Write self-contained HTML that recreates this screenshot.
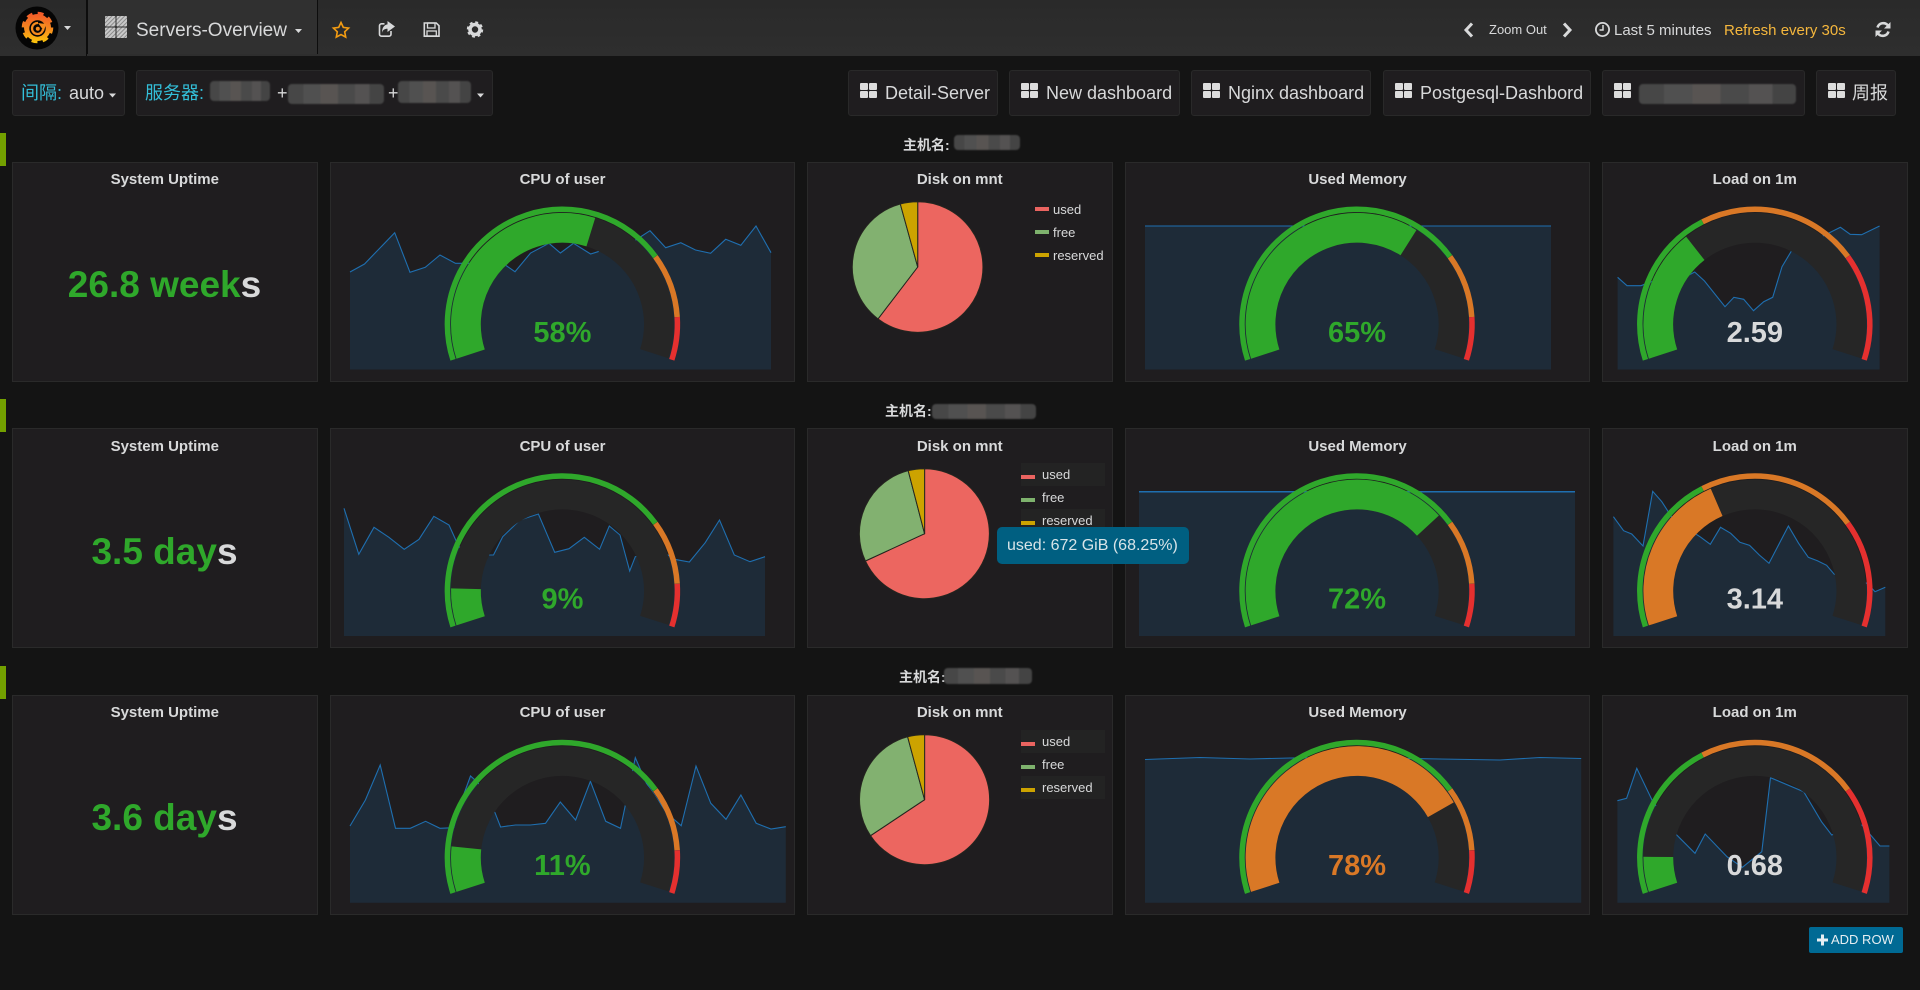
<!DOCTYPE html>
<html><head><meta charset="utf-8"><title>Servers-Overview</title>
<style>
*{box-sizing:border-box}
html,body{margin:0;padding:0;width:1920px;height:990px;overflow:hidden;background:#141414;font-family:"Liberation Sans","Noto Sans CJK SC",sans-serif;color:#d8d9da}
.a{position:absolute;white-space:nowrap}
.nav{left:0;top:0;width:1920px;height:56px;background:linear-gradient(#2a2a2a,#2e2e2e)}
.tab{left:87px;top:0;width:231px;height:54px;background:#303030;border-left:1px solid #0d0d0d;border-right:1px solid #0d0d0d}
.sep{left:86px;top:0;width:1px;height:56px;background:#0d0d0d}
.box{background:#1f1d1f;border:1px solid #292929;border-radius:3px;top:70px;height:46px}
.t18{font-size:18px;top:82px;line-height:22px}
.cy{color:#33bfd9}
.p{background:#1f1d1f;border:1px solid #2a2a2a;width:305.5px;height:219.5px}
.ti{font-size:15px;font-weight:bold;text-align:center;left:0;right:0;top:8px;line-height:18px;position:absolute}
.r2 .ti,.ti.r2{top:9px}
.stat{font-size:37px;font-weight:bold;color:#2fa82b;text-align:center;line-height:44px}
.stat b{color:#d8d9da}
.mark{left:0;width:6px;height:33px;background:#73a000}
.rt{font-size:14px;font-weight:bold;line-height:18px}
.bl{background:linear-gradient(90deg,#474747 0 16%,#505050 16% 34%,#585452 34% 52%,#4a4a4a 52% 70%,#545252 70% 85%,#444 85%);filter:blur(.8px);border-radius:4px}
.lg{font-size:13px;line-height:16px}
.sw{width:14px;height:4px}
.lbg{background:#232323;width:84px;height:23px}
.tip{left:997px;top:527px;width:192px;height:37px;background:#005f81;border-radius:5px;font-size:16px;line-height:37px;padding-left:10px;color:#d8e4e8}
.add{left:1809px;top:927px;width:94px;height:26px;background:#006a94;border-radius:2px;font-size:13px;line-height:25px;padding-left:22px;color:#e6eef2}
svg{position:absolute;left:0;top:0}
</style></head><body>
<div class="a nav"></div>
<div class="a tab"></div>
<div class="a sep"></div>
<div class="a" style="left:136px;top:19px;font-size:19px;line-height:24px;color:#d8d9da">Servers-Overview</div>
<div class="a" style="left:1489px;top:22px;font-size:13px;line-height:16px">Zoom Out</div>
<div class="a" style="left:1614px;top:22px;font-size:15px;line-height:18px">Last 5 minutes</div>
<div class="a" style="left:1724px;top:22px;font-size:15px;line-height:18px;color:#f5b73d">Refresh every 30s</div>

<div class="a box" style="left:12px;width:113px"></div>
<div class="a t18 cy" style="left:21px">间隔:</div>
<div class="a t18" style="left:69px">auto</div>
<div class="a box" style="left:136px;width:357px"></div>
<div class="a t18 cy" style="left:145px">服务器:</div>
<div class="a bl" style="left:210px;top:81px;width:60px;height:20px"></div>
<div class="a t18" style="left:277px">+</div>
<div class="a bl" style="left:288px;top:84px;width:96px;height:20px"></div>
<div class="a t18" style="left:388px">+</div>
<div class="a bl" style="left:398px;top:81px;width:73px;height:22px"></div>

<div class="a box" style="left:848px;width:150px"></div>
<div class="a t18" style="left:885px">Detail-Server</div>
<div class="a box" style="left:1009px;width:171px"></div>
<div class="a t18" style="left:1046px">New dashboard</div>
<div class="a box" style="left:1191px;width:180px"></div>
<div class="a t18" style="left:1228px">Nginx dashboard</div>
<div class="a box" style="left:1383px;width:208px"></div>
<div class="a t18" style="left:1420px">Postgesql-Dashbord</div>
<div class="a box" style="left:1602px;width:203px"></div>
<div class="a bl" style="left:1639px;top:84px;width:157px;height:20px"></div>
<div class="a box" style="left:1816px;width:80px"></div>
<div class="a t18" style="left:1852px">周报</div>

<div class="a mark" style="top:133px"></div>
<div class="a mark" style="top:399px"></div>
<div class="a mark" style="top:666px"></div>
<div class="a rt" style="left:903px;top:136px">主机名:</div>
<div class="a bl" style="left:954px;top:135px;width:66px;height:15px"></div>
<div class="a rt" style="left:885px;top:402px">主机名:</div>
<div class="a bl" style="left:932px;top:404px;width:104px;height:15px"></div>
<div class="a rt" style="left:899px;top:668px">主机名:</div>
<div class="a bl" style="left:944px;top:668px;width:88px;height:16px"></div>

<!-- Row 1 panels -->
<div class="a p" style="left:12px;top:162px"><div class="ti">System Uptime</div></div>
<div class="a p" style="left:330px;top:162px;width:465px"><div class="ti">CPU of user</div></div>
<div class="a p" style="left:807px;top:162px"><div class="ti">Disk on mnt</div></div>
<div class="a p" style="left:1125px;top:162px;width:465px"><div class="ti">Used Memory</div></div>
<div class="a p" style="left:1602px;top:162px"><div class="ti">Load on 1m</div></div>
<!-- Row 2 panels -->
<div class="a p r2" style="left:12px;top:428px"><div class="ti">System Uptime</div></div>
<div class="a p r2" style="left:330px;top:428px;width:465px"><div class="ti">CPU of user</div></div>
<div class="a p r2" style="left:807px;top:428px"><div class="ti">Disk on mnt</div></div>
<div class="a p r2" style="left:1125px;top:428px;width:465px"><div class="ti">Used Memory</div></div>
<div class="a p r2" style="left:1602px;top:428px"><div class="ti">Load on 1m</div></div>
<!-- Row 3 panels -->
<div class="a p" style="left:12px;top:695px"><div class="ti">System Uptime</div></div>
<div class="a p" style="left:330px;top:695px;width:465px"><div class="ti">CPU of user</div></div>
<div class="a p" style="left:807px;top:695px"><div class="ti">Disk on mnt</div></div>
<div class="a p" style="left:1125px;top:695px;width:465px"><div class="ti">Used Memory</div></div>
<div class="a p" style="left:1602px;top:695px"><div class="ti">Load on 1m</div></div>

<div class="a stat" style="left:12px;width:305px;top:262.5px">26.8 week<b>s</b></div>
<div class="a stat" style="left:12px;width:305px;top:530px">3.5 day<b>s</b></div>
<div class="a stat" style="left:12px;width:305px;top:796px">3.6 day<b>s</b></div>

<!-- legends -->
<div class="a lbg" style="left:1021px;top:463px"></div>
<div class="a lbg" style="left:1021px;top:509px"></div>
<div class="a lbg" style="left:1021px;top:730px"></div>
<div class="a lbg" style="left:1021px;top:776px"></div>

<div class="a sw" style="left:1035px;top:207px;background:#ea6460"></div><div class="a lg" style="left:1053px;top:202px">used</div>
<div class="a sw" style="left:1035px;top:230px;background:#7eb26d"></div><div class="a lg" style="left:1053px;top:225px">free</div>
<div class="a sw" style="left:1035px;top:253px;background:#cca300"></div><div class="a lg" style="left:1053px;top:248px">reserved</div>

<div class="a sw" style="left:1021px;top:475px;background:#ea6460"></div><div class="a lg" style="left:1042px;top:467px">used</div>
<div class="a sw" style="left:1021px;top:498px;background:#7eb26d"></div><div class="a lg" style="left:1042px;top:490px">free</div>
<div class="a sw" style="left:1021px;top:521px;background:#cca300"></div><div class="a lg" style="left:1042px;top:513px">reserved</div>

<div class="a sw" style="left:1021px;top:742px;background:#ea6460"></div><div class="a lg" style="left:1042px;top:734px">used</div>
<div class="a sw" style="left:1021px;top:765px;background:#7eb26d"></div><div class="a lg" style="left:1042px;top:757px">free</div>
<div class="a sw" style="left:1021px;top:788px;background:#cca300"></div><div class="a lg" style="left:1042px;top:780px">reserved</div>

<svg width="1920" height="990" viewBox="0 0 1920 990" xmlns="http://www.w3.org/2000/svg">
<defs>
<pattern id="h" width="3" height="3" patternUnits="userSpaceOnUse" patternTransform="rotate(45)"><rect width="3" height="3" fill="#c9c9c9"/><rect width="1" height="3" fill="#8a8a8a"/></pattern>
<linearGradient id="fl" gradientUnits="userSpaceOnUse" x1="37" y1="11" x2="37" y2="44"><stop offset="0" stop-color="#f0522b"/><stop offset=".55" stop-color="#f78b1e"/><stop offset="1" stop-color="#fbca0a"/></linearGradient>
<symbol id="th" viewBox="0 0 17 15" overflow="visible"><rect x="0" y="0" width="8" height="7" rx="1" fill="#dcdcdc"/><rect x="9" y="0" width="8" height="7" rx="1" fill="#dcdcdc"/><rect x="0" y="8" width="8" height="7" rx="1" fill="#dcdcdc"/><rect x="9" y="8" width="8" height="7" rx="1" fill="#dcdcdc"/></symbol>
</defs>

<!-- logo -->
<circle cx="37" cy="28" r="21.5" fill="#050505"/>
<circle cx="37.5" cy="27.5" r="13.5" fill="url(#fl)"/>
<circle cx="37.5" cy="27.5" r="14.5" fill="none" stroke="url(#fl)" stroke-width="2.6" stroke-dasharray="6 5.4"/>
<circle cx="37.5" cy="28.5" r="8.2" fill="#050505"/>
<path d="M43 29 A5.5 5.5 0 1 1 38 23" fill="none" stroke="#f78b1e" stroke-width="2.3"/>
<path d="M38 23 L46 24 L44 31 Z" fill="#f78b1e"/>
<circle cx="37.8" cy="28.8" r="2" fill="#f78b1e"/>
<path d="M64 26 h7 l-3.5 4 z" fill="#d8d9da"/>

<!-- dashboard icon -->
<rect x="105" y="16" width="10.5" height="10.5" rx="1" fill="url(#h)"/><rect x="116.5" y="16" width="10.5" height="10.5" rx="1" fill="url(#h)"/>
<rect x="105" y="27.5" width="10.5" height="10.5" rx="1" fill="url(#h)"/><rect x="116.5" y="27.5" width="10.5" height="10.5" rx="1" fill="url(#h)"/>
<path d="M295 29 h7 l-3.5 4 z" fill="#d8d9da"/>

<!-- star -->
<path d="M341 22.5 l2.3 4.9 5.3 .7 -3.9 3.7 1 5.3 -4.7 -2.6 -4.7 2.6 1 -5.3 -3.9 -3.7 5.3 -.7 z" fill="none" stroke="#f39c12" stroke-width="1.6" stroke-linejoin="miter"/>
<!-- share -->
<path d="M391 31 v3.2 a2 2 0 0 1-2 2 h-7.5 a2 2 0 0 1-2-2 v-8.4 a2 2 0 0 1 2-2 h3" fill="none" stroke="#d8d9da" stroke-width="1.6"/>
<path d="M387.5 21 l7.5 5.5 -7.5 5.5 v-3.2 c-2.8 0-4.6 .9-5.5 3.9 c0-5 2.3-8 5.5-8.3 z" fill="#d8d9da"/>
<!-- save -->
<path d="M424.3 23 h12 l2.7 2.7 v10.5 h-14.7 z" fill="none" stroke="#d8d9da" stroke-width="1.6"/>
<rect x="427.5" y="23" width="7.5" height="5" fill="none" stroke="#d8d9da" stroke-width="1.3"/>
<rect x="427" y="31" width="9.3" height="5" fill="none" stroke="#d8d9da" stroke-width="1.3"/>
<!-- gear -->
<circle cx="475" cy="29.5" r="5" fill="none" stroke="#d8d9da" stroke-width="3.6"/>
<circle cx="475" cy="29.5" r="7" fill="none" stroke="#d8d9da" stroke-width="2.4" stroke-dasharray="2.8 2.7"/>
<!-- chevrons -->
<path d="M1472 23.5 l-6 6.5 6 6.5" fill="none" stroke="#d8d9da" stroke-width="3"/>
<path d="M1564 23.5 l6 6.5 -6 6.5" fill="none" stroke="#d8d9da" stroke-width="3"/>
<!-- clock -->
<circle cx="1602.5" cy="29.5" r="6.6" fill="none" stroke="#d8d9da" stroke-width="1.8"/>
<path d="M1603 25 v5 h-3.5" fill="none" stroke="#d8d9da" stroke-width="1.5"/>
<!-- refresh -->
<path d="M1877.5 27.5 a6 6 0 0 1 10.5 -2" fill="none" stroke="#d8d9da" stroke-width="2.6"/>
<path d="M1890.5 22 v6.5 h-6.5 z" fill="#d8d9da"/>
<path d="M1888.5 31.5 a6 6 0 0 1 -10.5 2" fill="none" stroke="#d8d9da" stroke-width="2.6"/>
<path d="M1875.5 37 v-6.5 h6.5 z" fill="#d8d9da"/>

<!-- submenu carets -->
<path d="M109 93.5 h7 l-3.5 4 z" fill="#d8d9da"/>
<path d="M477 93.5 h7 l-3.5 4 z" fill="#d8d9da"/>
<!-- link icons -->
<use href="#th" x="860" y="83" width="17" height="15"/>
<use href="#th" x="1021" y="83" width="17" height="15"/>
<use href="#th" x="1203" y="83" width="17" height="15"/>
<use href="#th" x="1395" y="83" width="17" height="15"/>
<use href="#th" x="1614" y="83" width="17" height="15"/>
<use href="#th" x="1828" y="83" width="17" height="15"/>

<!-- sparklines -->
<g fill="#1e2b38" stroke="none">
<polygon points="350,369.5 350,272 364.5,264 394.7,232.7 410,272.3 425.3,267.3 440,255 455.5,263.3 469.4,263.3 484.5,262 500,250 505.3,265 515,271.7 530.6,253 549,243.3 560.4,253 573.5,243.3 590.6,254 598,251.7 612,240 628,245 650,230.7 665.7,247.7 680.8,242.7 695.5,250 710.6,253.3 725.7,239.3 740.8,245.3 756,226 771,252.7 771,369.5"/>
<rect x="1145" y="226" width="406" height="143.5"/>
<polygon points="1617.6,369.5 1617.6,277.3 1627,285.7 1641,285.7 1651.4,281.7 1670,285 1694.7,272 1704.5,281 1725,306.7 1733.9,297.3 1743.7,299.3 1753.5,310.7 1763.7,301.7 1772.7,297.3 1782,266.7 1791,251.7 1800,240 1812,238 1822.9,236 1840.4,227.3 1850.2,234.3 1861.6,234.7 1879.6,226 1879.6,369.5"/>
<polygon points="344,636 344,508.3 358.8,554.3 374,527.3 388.9,537.3 404.2,549.3 419,539.3 433.8,516.3 449,525 458.8,546.7 478,555 493.5,555 502.7,536.7 520,520 538.4,514 554.7,552.3 569,548.7 584.3,537.3 599.6,549.3 609.3,526 620,535 629.7,571 635.3,556.7 650,553 668,555 674.6,559.3 689.4,562 705.2,542.7 719.5,520 734.3,555 750,561.7 765,556.7 765,636"/>
<rect x="1139" y="491.7" width="436" height="144.3"/>
<polygon points="1613.4,636 1613.4,516.7 1623.6,530.7 1631.7,534 1643,546 1652.7,491.3 1661.8,501.7 1673.6,520 1700,536.7 1710.3,544.3 1720.5,527.3 1730.7,533.3 1739.9,542.3 1749.6,545.3 1759.3,555 1769,563.3 1788.4,526 1798.6,543.3 1808.3,557.3 1817.4,560.7 1826.6,565.3 1834.3,574.3 1850,580 1867.4,583.3 1875,591.7 1885.3,587.3 1885.3,636"/>
<polygon points="350,902.7 350,826 365.4,800 380.2,765 395.5,828.3 410.3,828.3 425.6,821.3 439.9,828.3 453.7,827.7 459.3,806.7 470.5,776 478,782.7 495,812.7 500.6,827 515.4,825 530.2,825 545.5,823.3 560.3,802 575.6,820 590.4,781.3 605.7,821.3 620.5,828.3 635.3,757.7 646.5,783.3 667,813.3 681.2,825.7 696,766 710.8,803.3 726,819.3 740.9,795 756.2,823.3 771,829 785.8,826.7 785.8,902.7"/>
<polygon points="1145,902.7 1145,759.5 1200,757.5 1250,759 1290,758 1360,757.5 1440,759 1500,760 1540,757.5 1581.2,758.5 1581.2,902.7"/>
<polygon points="1617.4,902.7 1617.4,800.7 1626.6,798.3 1636.8,768.3 1652,800 1676,834.3 1695,853.3 1705.2,834 1727,856.7 1742.4,867.3 1761.8,851.7 1770.5,777.7 1803.7,791.7 1821.5,821.7 1831.7,835 1862,825 1880,846 1889.4,846 1889.4,902.7"/>
</g>
<g fill="none" stroke="#1f6fb0" stroke-width="1.1">
<polyline points="350,272 364.5,264 394.7,232.7 410,272.3 425.3,267.3 440,255 455.5,263.3 469.4,263.3 484.5,262 500,250 505.3,265 515,271.7 530.6,253 549,243.3 560.4,253 573.5,243.3 590.6,254 598,251.7 612,240 628,245 650,230.7 665.7,247.7 680.8,242.7 695.5,250 710.6,253.3 725.7,239.3 740.8,245.3 756,226 771,252.7"/>
<polyline points="1145,226 1551,226"/>
<polyline points="1617.6,277.3 1627,285.7 1641,285.7 1651.4,281.7 1670,285 1694.7,272 1704.5,281 1725,306.7 1733.9,297.3 1743.7,299.3 1753.5,310.7 1763.7,301.7 1772.7,297.3 1782,266.7 1791,251.7 1800,240 1812,238 1822.9,236 1840.4,227.3 1850.2,234.3 1861.6,234.7 1879.6,226"/>
<polyline points="344,508.3 358.8,554.3 374,527.3 388.9,537.3 404.2,549.3 419,539.3 433.8,516.3 449,525 458.8,546.7 478,555 493.5,555 502.7,536.7 520,520 538.4,514 554.7,552.3 569,548.7 584.3,537.3 599.6,549.3 609.3,526 620,535 629.7,571 635.3,556.7 650,553 668,555 674.6,559.3 689.4,562 705.2,542.7 719.5,520 734.3,555 750,561.7 765,556.7"/>
<polyline points="1139,491.7 1575,491.7" stroke-width="1.5"/>
<polyline points="1613.4,516.7 1623.6,530.7 1631.7,534 1643,546 1652.7,491.3 1661.8,501.7 1673.6,520 1700,536.7 1710.3,544.3 1720.5,527.3 1730.7,533.3 1739.9,542.3 1749.6,545.3 1759.3,555 1769,563.3 1788.4,526 1798.6,543.3 1808.3,557.3 1817.4,560.7 1826.6,565.3 1834.3,574.3 1850,580 1867.4,583.3 1875,591.7 1885.3,587.3"/>
<polyline points="350,826 365.4,800 380.2,765 395.5,828.3 410.3,828.3 425.6,821.3 439.9,828.3 453.7,827.7 459.3,806.7 470.5,776 478,782.7 495,812.7 500.6,827 515.4,825 530.2,825 545.5,823.3 560.3,802 575.6,820 590.4,781.3 605.7,821.3 620.5,828.3 635.3,757.7 646.5,783.3 667,813.3 681.2,825.7 696,766 710.8,803.3 726,819.3 740.9,795 756.2,823.3 771,829 785.8,826.7"/>
<polyline points="1145,759.5 1200,757.5 1250,759 1290,758 1360,757.5 1440,759 1500,760 1540,757.5 1581.2,758.5"/>
<polyline points="1617.4,800.7 1626.6,798.3 1636.8,768.3 1652,800 1676,834.3 1695,853.3 1705.2,834 1727,856.7 1742.4,867.3 1761.8,851.7 1770.5,777.7 1803.7,791.7 1821.5,821.7 1831.7,835 1862,825 1880,846 1889.4,846"/>
</g>

<!-- pies -->
<g stroke="#25251f" stroke-width="1" stroke-linejoin="round">
<path d="M917.7 267 V201.7 A65.3 65.3 0 1 1 878 318.9 Z" fill="#ec6660"/>
<path d="M917.7 267 L878 318.9 A65.3 65.3 0 0 1 900.3 204 Z" fill="#82b170"/>
<path d="M917.7 267 L900.3 204 A65.3 65.3 0 0 1 917.7 201.7 Z" fill="#cca300"/>
<path d="M924.6 533.7 V468.7 A65 65 0 1 1 865.4 561 Z" fill="#ec6660"/>
<path d="M924.6 533.7 L865.4 561 A65 65 0 0 1 908.2 470.7 Z" fill="#82b170"/>
<path d="M924.6 533.7 L908.2 470.7 A65 65 0 0 1 924.6 468.7 Z" fill="#cca300"/>
<path d="M924.6 799.7 V734.7 A65 65 0 1 1 870.5 835.7 Z" fill="#ec6660"/>
<path d="M924.6 799.7 L870.5 835.7 A65 65 0 0 1 907.6 736.8 Z" fill="#82b170"/>
<path d="M924.6 799.7 L907.6 736.8 A65 65 0 0 1 924.6 734.7 Z" fill="#cca300"/>
</g>

<!-- gauges -->
<g transform="translate(562.4,324.3)" fill="none">
<circle r="96.5" pathLength="360" stroke="#262626" stroke-width="29.8" stroke-dasharray="216 360" transform="rotate(162)"/>
<circle r="96.5" pathLength="360" stroke="#2fa82b" stroke-width="29.8" stroke-dasharray="125.3 360" transform="rotate(162)"/>
<circle r="115" pathLength="360" stroke="#2fa82b" stroke-width="5.5" stroke-dasharray="162 360" transform="rotate(162)"/>
<circle r="115" pathLength="360" stroke="#d97826" stroke-width="5.5" stroke-dasharray="32.4 360" transform="rotate(324)"/>
<circle r="115" pathLength="360" stroke="#e5302f" stroke-width="5.5" stroke-dasharray="21.6 360" transform="rotate(356.4)"/>
<text y="17.5" text-anchor="middle" font-size="29" font-weight="bold" fill="#2fa82b" stroke="none" font-family="Liberation Sans, sans-serif">58%</text>
</g>
<g transform="translate(1357,324.3)" fill="none">
<circle r="96.5" pathLength="360" stroke="#262626" stroke-width="29.8" stroke-dasharray="216 360" transform="rotate(162)"/>
<circle r="96.5" pathLength="360" stroke="#2fa82b" stroke-width="29.8" stroke-dasharray="140.4 360" transform="rotate(162)"/>
<circle r="115" pathLength="360" stroke="#2fa82b" stroke-width="5.5" stroke-dasharray="162 360" transform="rotate(162)"/>
<circle r="115" pathLength="360" stroke="#d97826" stroke-width="5.5" stroke-dasharray="32.4 360" transform="rotate(324)"/>
<circle r="115" pathLength="360" stroke="#e5302f" stroke-width="5.5" stroke-dasharray="21.6 360" transform="rotate(356.4)"/>
<text y="17.5" text-anchor="middle" font-size="29" font-weight="bold" fill="#2fa82b" stroke="none" font-family="Liberation Sans, sans-serif">65%</text>
</g>
<g transform="translate(1754.8,324.3)" fill="none">
<circle r="96.5" pathLength="360" stroke="#262626" stroke-width="29.8" stroke-dasharray="216 360" transform="rotate(162)"/>
<circle r="96.5" pathLength="360" stroke="#2fa82b" stroke-width="29.8" stroke-dasharray="70 360" transform="rotate(162)"/>
<circle r="115" pathLength="360" stroke="#2fa82b" stroke-width="5.5" stroke-dasharray="81 360" transform="rotate(162)"/>
<circle r="115" pathLength="360" stroke="#d97826" stroke-width="5.5" stroke-dasharray="81 360" transform="rotate(243)"/>
<circle r="115" pathLength="360" stroke="#e5302f" stroke-width="5.5" stroke-dasharray="54 360" transform="rotate(324)"/>
<text y="17.5" text-anchor="middle" font-size="29" font-weight="bold" fill="#d8d9da" stroke="none" font-family="Liberation Sans, sans-serif">2.59</text>
</g>
<g transform="translate(562.4,591)" fill="none">
<circle r="96.5" pathLength="360" stroke="#262626" stroke-width="29.8" stroke-dasharray="216 360" transform="rotate(162)"/>
<circle r="96.5" pathLength="360" stroke="#2fa82b" stroke-width="29.8" stroke-dasharray="19.4 360" transform="rotate(162)"/>
<circle r="115" pathLength="360" stroke="#2fa82b" stroke-width="5.5" stroke-dasharray="162 360" transform="rotate(162)"/>
<circle r="115" pathLength="360" stroke="#d97826" stroke-width="5.5" stroke-dasharray="32.4 360" transform="rotate(324)"/>
<circle r="115" pathLength="360" stroke="#e5302f" stroke-width="5.5" stroke-dasharray="21.6 360" transform="rotate(356.4)"/>
<text y="17.5" text-anchor="middle" font-size="29" font-weight="bold" fill="#2fa82b" stroke="none" font-family="Liberation Sans, sans-serif">9%</text>
</g>
<g transform="translate(1357,591)" fill="none">
<circle r="96.5" pathLength="360" stroke="#262626" stroke-width="29.8" stroke-dasharray="216 360" transform="rotate(162)"/>
<circle r="96.5" pathLength="360" stroke="#2fa82b" stroke-width="29.8" stroke-dasharray="155.5 360" transform="rotate(162)"/>
<circle r="115" pathLength="360" stroke="#2fa82b" stroke-width="5.5" stroke-dasharray="162 360" transform="rotate(162)"/>
<circle r="115" pathLength="360" stroke="#d97826" stroke-width="5.5" stroke-dasharray="32.4 360" transform="rotate(324)"/>
<circle r="115" pathLength="360" stroke="#e5302f" stroke-width="5.5" stroke-dasharray="21.6 360" transform="rotate(356.4)"/>
<text y="17.5" text-anchor="middle" font-size="29" font-weight="bold" fill="#2fa82b" stroke="none" font-family="Liberation Sans, sans-serif">72%</text>
</g>
<g transform="translate(1754.8,591)" fill="none">
<circle r="96.5" pathLength="360" stroke="#262626" stroke-width="29.8" stroke-dasharray="216 360" transform="rotate(162)"/>
<circle r="96.5" pathLength="360" stroke="#d97826" stroke-width="29.8" stroke-dasharray="84.8 360" transform="rotate(162)"/>
<circle r="115" pathLength="360" stroke="#2fa82b" stroke-width="5.5" stroke-dasharray="81 360" transform="rotate(162)"/>
<circle r="115" pathLength="360" stroke="#d97826" stroke-width="5.5" stroke-dasharray="81 360" transform="rotate(243)"/>
<circle r="115" pathLength="360" stroke="#e5302f" stroke-width="5.5" stroke-dasharray="54 360" transform="rotate(324)"/>
<text y="17.5" text-anchor="middle" font-size="29" font-weight="bold" fill="#d8d9da" stroke="none" font-family="Liberation Sans, sans-serif">3.14</text>
</g>
<g transform="translate(562.4,857.5)" fill="none">
<circle r="96.5" pathLength="360" stroke="#262626" stroke-width="29.8" stroke-dasharray="216 360" transform="rotate(162)"/>
<circle r="96.5" pathLength="360" stroke="#2fa82b" stroke-width="29.8" stroke-dasharray="23.8 360" transform="rotate(162)"/>
<circle r="115" pathLength="360" stroke="#2fa82b" stroke-width="5.5" stroke-dasharray="162 360" transform="rotate(162)"/>
<circle r="115" pathLength="360" stroke="#d97826" stroke-width="5.5" stroke-dasharray="32.4 360" transform="rotate(324)"/>
<circle r="115" pathLength="360" stroke="#e5302f" stroke-width="5.5" stroke-dasharray="21.6 360" transform="rotate(356.4)"/>
<text y="17.5" text-anchor="middle" font-size="29" font-weight="bold" fill="#2fa82b" stroke="none" font-family="Liberation Sans, sans-serif">11%</text>
</g>
<g transform="translate(1357,857.5)" fill="none">
<circle r="96.5" pathLength="360" stroke="#262626" stroke-width="29.8" stroke-dasharray="216 360" transform="rotate(162)"/>
<circle r="96.5" pathLength="360" stroke="#d97826" stroke-width="29.8" stroke-dasharray="168.5 360" transform="rotate(162)"/>
<circle r="115" pathLength="360" stroke="#2fa82b" stroke-width="5.5" stroke-dasharray="162 360" transform="rotate(162)"/>
<circle r="115" pathLength="360" stroke="#d97826" stroke-width="5.5" stroke-dasharray="32.4 360" transform="rotate(324)"/>
<circle r="115" pathLength="360" stroke="#e5302f" stroke-width="5.5" stroke-dasharray="21.6 360" transform="rotate(356.4)"/>
<text y="17.5" text-anchor="middle" font-size="29" font-weight="bold" fill="#d97826" stroke="none" font-family="Liberation Sans, sans-serif">78%</text>
</g>
<g transform="translate(1754.8,857.5)" fill="none">
<circle r="96.5" pathLength="360" stroke="#262626" stroke-width="29.8" stroke-dasharray="216 360" transform="rotate(162)"/>
<circle r="96.5" pathLength="360" stroke="#2fa82b" stroke-width="29.8" stroke-dasharray="18.4 360" transform="rotate(162)"/>
<circle r="115" pathLength="360" stroke="#2fa82b" stroke-width="5.5" stroke-dasharray="81 360" transform="rotate(162)"/>
<circle r="115" pathLength="360" stroke="#d97826" stroke-width="5.5" stroke-dasharray="81 360" transform="rotate(243)"/>
<circle r="115" pathLength="360" stroke="#e5302f" stroke-width="5.5" stroke-dasharray="54 360" transform="rotate(324)"/>
<text y="17.5" text-anchor="middle" font-size="29" font-weight="bold" fill="#d8d9da" stroke="none" font-family="Liberation Sans, sans-serif">0.68</text>
</g>
</svg>

<div class="a tip">used: 672 GiB (68.25%)</div>
<div class="a add">ADD ROW</div>
<svg width="1920" height="990" viewBox="0 0 1920 990" xmlns="http://www.w3.org/2000/svg"><path d="M1822.5 934.5 v11 M1817 940 h11" stroke="#e6eef2" stroke-width="3"/></svg>
</body></html>
